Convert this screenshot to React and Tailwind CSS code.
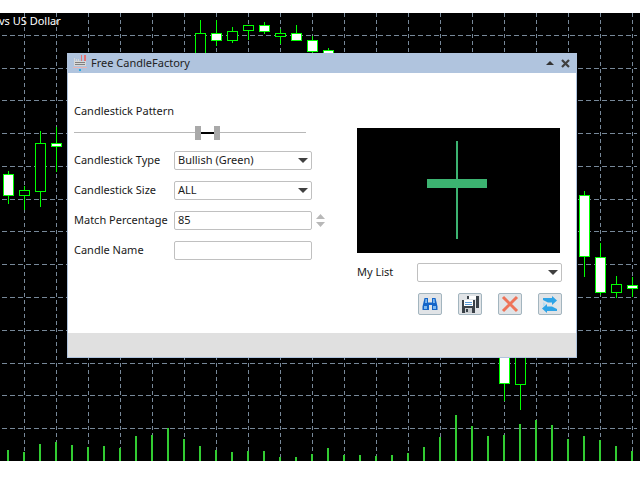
import { Fragment } from "react";
import { ChevronDown } from "lucide-react";

const VGRID = Array.from({ length: 20 }, (_, i) => 24 + i * 32);
const HGRID = [22, 55, 87, 120, 153, 186, 218, 251, 284, 317, 350, 382, 415];

const VOLUMES = [
  11, 9, 17, 19, 16, 14, 15, 13, 25, 26, 33, 22, 15, 11, 9, 10, 10, 4, 4, 7,
  13, 6, 6, 5, 6, 8, 14, 24, 46, 35, 25, 26, 37, 41, 36, 22, 25, 21, 15, 10,
];

// x, wick top, wick bottom, body top, body bottom, filled (y relative to the chart)
const CANDLES = [
  [8, 158, 191, 161, 183, true],
  [24, 173, 197, 177, 183, false],
  [40, 118, 194, 130, 179, false],
  [56, 114, 159, 130, 134, true],
  [200, 7, 60, 20, 60, false],
  [216, 7, 33, 20, 28, true],
  [232, 14, 30, 18, 28, false],
  [248, 12, 27, 12, 18, false],
  [264, 9, 21, 12, 19, true],
  [280, 16, 31, 20, 24, false],
  [296, 12, 28, 20, 28, true],
  [312, 23, 40, 27, 39, true],
  [328, 35, 60, 37, 60, true],
  [504, 330, 388, 330, 371, true],
  [520, 330, 397, 330, 372, false],
  [584, 178, 264, 182, 244, true],
  [600, 230, 282, 244, 280, true],
  [616, 263, 285, 271, 280, false],
  [632, 264, 284, 272, 276, true],
];

function Chart() {
  return (
    <svg className="block h-full w-full" viewBox="0 0 640 448" shapeRendering="crispEdges">
      {VGRID.map((x) => (
        <line key={x} x1={x + 0.5} x2={x + 0.5} y1="0" y2="448" stroke="#778899" strokeDasharray="4 3" />
      ))}
      {HGRID.map((y) => (
        <line key={y} x1="2" x2="637" y1={y + 0.5} y2={y + 0.5} stroke="#778899" strokeDasharray="5 3" />
      ))}
      {VOLUMES.map((h, i) => (
        <rect key={i} x={7 + i * 16} y={448 - h} width="2" height={h} fill="#32cd32" />
      ))}
      {CANDLES.map(([x, wt, wb, bt, bb, filled]) => (
        <Fragment key={x}>
          <line x1={x + 0.5} x2={x + 0.5} y1={wt} y2={wb} stroke="#00ff00" />
          <rect x={x - 4.5} y={bt + 0.5} width="10" height={bb - bt - 1} fill={filled ? "#ffffff" : "#000000"} stroke="#00ff00" />
        </Fragment>
      ))}
    </svg>
  );
}

function Select({ value, className }) {
  return (
    <div className={`flex h-[19px] items-center justify-between rounded-[2px] border border-[#c0c0c0] bg-white pl-[3px] pr-[3px] ${className}`}>
      <span>{value}</span>
      <svg width="10" height="5" viewBox="0 0 10 5"><path d="M0 0h10L5 5z" fill="#404040" /></svg>
    </div>
  );
}

function Field({ label, children }) {
  return (
    <div className="flex items-center">
      <span className="w-[100px]">{label}</span>
      {children}
    </div>
  );
}

function IconButton({ children }) {
  return (
    <button className="flex h-[22px] w-[24px] items-center justify-center rounded-[2px] border border-[#a3b5bf] bg-[#e1e4e7]">
      {children}
    </button>
  );
}

function FactoryIcon() {
  return (
    <svg width="14" height="17" viewBox="0 0 14 17" shapeRendering="crispEdges">
      <path d="M8 0h1v6H8zM11 0h2v6h-2z" fill="#e57373" />
      <path d="M1 3h1v3h1V4h1v2h1V4h1v2h7v5H1z" fill="#d8d8d8" />
      <path d="M2 7h10v1H2zM2 9h10v1H2z" fill="#808080" />
      <path d="M0 12h14v1H0z" fill="#e8b4b4" />
      <path d="M6 14h2v2H6z" fill="#29a9e0" />
    </svg>
  );
}

function Binoculars() {
  return (
    <svg width="16" height="16" viewBox="0 0 16 16">
      <path d="M2.5 2h3.5v4.500h4V2h3.500l2 8.500V14h-5.500V9h-1v0H7v5H.5v-3.500z" fill="#1565c8" />
      <path d="M2 10h3v3H2zM11 10h3v3h-3zM3.500 3h1.500v4H3zM11 3h1.500l.5 4h-2z" fill="#7db8ef" />
    </svg>
  );
}

function Floppy() {
  return (
    <svg width="17" height="17" viewBox="0 0 17 17" shapeRendering="crispEdges">
      <path d="M5 0h12v12h-3v-9H5z" fill="#3a4148" />
      <path d="M7 0h7v3H7z" fill="#ffffff" />
      <path d="M0 4h13v13H0z" fill="#3a4148" />
      <path d="M2 4h9v6H2z" fill="#ffffff" />
      <path d="M3 6h7v1H3zM3 8h7v1H3z" fill="#5b9bd5" />
      <path d="M3 12h7v5H3z" fill="#c8ccd0" />
      <path d="M4 13h2v3H4z" fill="#3a4148" />
    </svg>
  );
}

function RedCross() {
  return (
    <svg width="18" height="18" viewBox="0 0 18 18">
      <path d="M2 2l14 14M16 2L2 16" stroke="#ee7358" strokeWidth="3" />
    </svg>
  );
}

function Refresh() {
  return (
    <svg width="16" height="17" viewBox="0 0 16 17">
      <path d="M1 2h9V0l5 4.500-5 4.500V6.500H6L1 4z" fill="#2fa4e7" />
      <path d="M15 15H5v2L0 12.500 5 8v2.500h5l5 2.500z" fill="#2fa4e7" />
      <path d="M1 6l3 2-3 3z" fill="#b8dcf2" />
    </svg>
  );
}

function Dialog() {
  return (
    <div className="absolute left-[67px] top-[40px] flex h-[305px] w-[510px] flex-col border-x-[1px] border-b-[1px] border-[#b0c4de] bg-white text-[11px] text-[#1a1a1a]">
      <div className="-mx-px flex h-[20px] shrink-0 items-center bg-[#b0c4de] pl-[6px] pr-[7px]">
        <FactoryIcon />
        <span className="ml-[4px] text-[#222]">Free CandleFactory</span>
        <svg className="ml-auto" width="8" height="4" viewBox="0 0 8 4"><path d="M0 4h8L4 0z" fill="#333" /></svg>
        <svg className="ml-[7px]" width="9" height="9" viewBox="0 0 9 9"><path d="M1 1l7 7M8 1L1 8" stroke="#404040" strokeWidth="2.200" /></svg>
      </div>

      <div className="flex flex-1">
        <div className="flex w-[289px] flex-col pl-[6px] pt-[30px]">
          <span>Candlestick Pattern</span>
          <div className="relative mt-[6px] h-[14px] w-[232px]">
            <div className="absolute inset-x-0 top-[6px] h-[1px] bg-[#b8b8b8]" />
            <div className="absolute left-[127px] top-[6px] h-[2px] w-[13px] bg-black" />
            <div className="absolute left-[121px] top-0 h-[14px] w-[6px] bg-[#a9a9a9]" />
            <div className="absolute left-[140px] top-0 h-[14px] w-[6px] bg-[#a9a9a9]" />
          </div>
          <div className="mt-[11px] flex flex-col gap-[11px]">
            <Field label="Candlestick Type"><Select value="Bullish (Green)" className="w-[138px]" /></Field>
            <Field label="Candlestick Size"><Select value="ALL" className="w-[138px]" /></Field>
            <Field label="Match Percentage">
              <div className="flex h-[19px] w-[138px] items-center rounded-[2px] border border-[#c0c0c0] pl-[3px]">85</div>
              <div className="ml-[4px] flex flex-col gap-[3px]">
                <svg className="block" width="9" height="5" viewBox="0 0 9 5"><path d="M0 5h9L4.500 0z" fill="#b8b8b8" /></svg>
                <svg className="block" width="9" height="5" viewBox="0 0 9 5"><path d="M0 0h9L4.500 5z" fill="#b8b8b8" /></svg>
              </div>
            </Field>
            <Field label="Candle Name">
              <div className="h-[19px] w-[138px] rounded-[2px] border border-[#c0c0c0]" />
            </Field>
          </div>
        </div>

        <div className="flex flex-col pt-[55px]">
          <div className="relative h-[125px] w-[203px] bg-black">
            <div className="absolute left-[99px] top-[13px] h-[98px] w-[2px] bg-[#3cb371]" />
            <div className="absolute left-[70px] top-[51px] h-[9px] w-[60px] bg-[#3cb371]" />
          </div>
          <div className="mt-[10px] flex items-center">
            <span className="w-[60px]">My List</span>
            <Select value="" className="w-[145px]" />
          </div>
          <div className="ml-[61px] mt-[11px] flex gap-[16px]">
            <IconButton><Binoculars /></IconButton>
            <IconButton><Floppy /></IconButton>
            <IconButton><RedCross /></IconButton>
            <IconButton><Refresh /></IconButton>
          </div>
        </div>
      </div>

      <div className="h-[24px] shrink-0 bg-[#e0e0e0]" />
    </div>
  );
}

export default function App() {
  return (
    <div className="flex h-[480px] w-[640px] flex-col overflow-hidden bg-white font-['Noto_Sans',sans-serif]">
      <div className="h-[13px] shrink-0" />
      <div className="relative h-[448px] shrink-0 bg-black">
        <Chart />
        <span className="absolute -left-[1px] top-0 text-[11px] text-white">vs US Dollar</span>
        <Dialog />
      </div>
    </div>
  );
}
